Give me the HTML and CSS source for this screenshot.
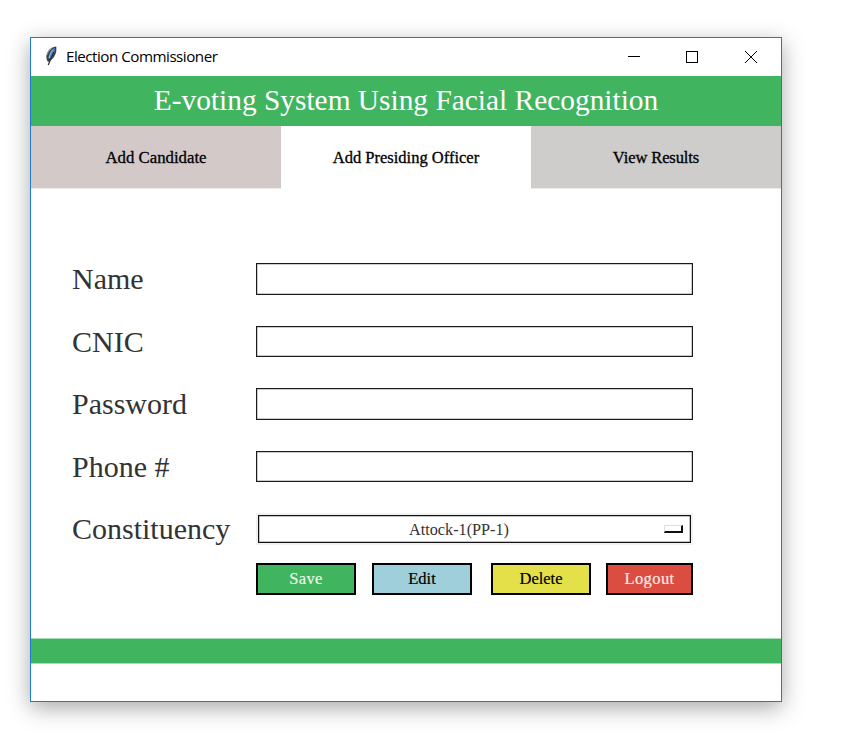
FILE: index.html
```html
<!DOCTYPE html>
<html lang="en">
<head>
<meta charset="utf-8">
<title>Election Commissioner</title>
<link rel="stylesheet" href="styles.css">
</head>
<body>
<main class="window">
  <div class="titlebar">
    <svg class="feather" width="14" height="20" viewBox="0 0 14 20">
      <path d="M12.300 0.500C8 0.800 4.500 3.500 3 7.500C2 10.500 2 13.500 4 16C8 14 11.500 10 12.300 5Z" fill="#3b3f45"/>
      <path d="M11 1.800C7.500 3.500 5 7 4.500 12L6 13C9 10.500 11 6 11 1.800Z" fill="#4a86d0"/>
      <path d="M8.500 4C6.800 6.500 5.500 9 5 12" stroke="#8db8ea" fill="none"/>
      <path d="M9.800 6L4.200 19" stroke="#24282e" stroke-width="1.100"/>
      <path d="M2.600 9.500Q4 4.500 8.500 1.800" stroke="#94979c" fill="none"/>
    </svg>
    <span class="caption">Election Commissioner</span>
    <svg class="controls" width="132" height="14" viewBox="0 0 132 14" fill="none" stroke="#000" shape-rendering="crispEdges">
      <path d="M0 6.500H12"/>
      <rect x="58.500" y="1.500" width="11" height="11"/>
      <path d="M117 1L129 13M129 1L117 13" shape-rendering="auto"/>
    </svg>
  </div>
  <h1 class="banner">E-voting System Using Facial Recognition</h1>
  <nav class="tabs">
    <div class="tab candidate">Add Candidate</div>
    <div class="tab officer">Add Presiding Officer</div>
    <div class="tab results">View Results</div>
  </nav>
  <form class="form">
    <label class="row"><span class="label">Name</span><input class="field"></label>
    <label class="row"><span class="label">CNIC</span><input class="field"></label>
    <label class="row"><span class="label">Password</span><input class="field" type="password"></label>
    <label class="row"><span class="label">Phone #</span><input class="field"></label>
    <div class="row"><span class="label">Constituency</span>
      <div class="select"><span class="value">Attock-1(PP-1)</span><span class="handle"></span></div>
    </div>
    <div class="actions">
      <button type="button" class="btn save">Save</button>
      <button type="button" class="btn edit">Edit</button>
      <button type="button" class="btn delete">Delete</button>
      <button type="button" class="btn logout">Logout</button>
    </div>
  </form>
  <div class="footer"></div>
</main>
</body>
</html>
```
FILE: styles.css
```css
* { box-sizing: border-box; }
body {
  margin: 0;
  padding: 37px 0 0 30px;
  height: 750px;
  overflow: hidden;
  background: #fff;
  font-family: "Liberation Serif", serif;
}
.window {
  width: 752px;
  height: 665px;
  display: flex;
  flex-direction: column;
  border: 1px solid #1d7cc9;
  background: #fff;
  box-shadow: 0 6px 21px rgba(0, 0, 0, 0.34);
}
.titlebar {
  flex: 0 0 38px;
  display: flex;
  align-items: center;
  padding: 0 21px 0 13px;
}
.feather {
  display: block;
  margin-top: -2px;
}
.caption {
  flex: 1;
  margin: -3px 0 0 8px;
  font: 15.2px "Open Sans", sans-serif;
  letter-spacing: -0.5px;
  color: #000;
}
.banner {
  flex: 0 0 50px;
  margin: 0;
  line-height: 48px;
  text-align: center;
  font-size: 29.4px;
  font-weight: 400;
  color: #fff;
  background: #40b45f;
}
.tabs {
  flex: 0 0 62px;
  display: grid;
  grid-template-columns: repeat(3, 1fr);
  box-shadow: 0 1px 0 #eceaea;
}
.tab {
  height: 62px;
  line-height: 63px;
  text-align: center;
  font-size: 16.5px;
  color: #000;
  -webkit-text-stroke: 0.3px #000;
}
.candidate { background: #d3c9c9; font-size: 16.8px; }
.officer { background: #fff; box-shadow: 0 1px 0 #fff; }
.results { background: #cfcdcb; letter-spacing: -0.1px; }
.form {
  flex: 1;
  padding: 75px 88px 0 41px;
}
.row {
  display: flex;
  height: 31px;
  margin-bottom: 31.5px;
}
.label {
  flex: none;
  width: 184px;
  line-height: 31px;
  font-size: 30px;
  color: #333;
}
.field {
  width: 437px;
  height: 31.5px;
  padding: 0 6px;
  border: 1px solid #1a1a1a;
  outline: 0;
  background: #fff;
  box-shadow: inset 0 0 0 0.5px #999;
}
.select {
  width: 433px;
  height: 28px;
  margin: 2px;
  display: flex;
  align-items: center;
  border: 1px solid #111;
  box-shadow: 0 0 0 2px #f1f1f1, inset 0 0 0 0.5px #888;
}
.value {
  flex: 1;
  padding: 2px 5px 0 0;
  text-align: center;
  font-size: 16.2px;
  line-height: 28px;
  color: #333;
}
.handle {
  width: 19px;
  height: 8px;
  margin-right: 7px;
  border: solid;
  border-width: 1px 2px 2px 1px;
  border-color: #ddd #111 #111 #ddd;
}
.actions {
  display: flex;
  margin: -13px 0 0 184px;
}
.btn {
  flex: none;
  width: 100px;
  height: 32px;
  padding: 1px 0 0;
  border: 2px solid #000;
  font: 16.5px "Liberation Serif", serif;
  -webkit-text-stroke: 0.2px currentColor;
}
.save { background: #40b45f; color: #e9f7ec; letter-spacing: 0.3px; }
.edit { margin-left: 16px; background: #9fcfda; color: #000; }
.delete { margin-left: 19px; background: #e3e049; color: #000; }
.logout { width: 87px; margin-left: 15px; background: #dc4d41; color: #fbe7e5; letter-spacing: 0.4px; }
.footer {
  height: 25px;
  margin-bottom: 37px;
  background: #40b45f;
  box-shadow: 0 -1px 0 #a6dcb4 inset, 0 -1px 0 #a6dcb4;
}
```
